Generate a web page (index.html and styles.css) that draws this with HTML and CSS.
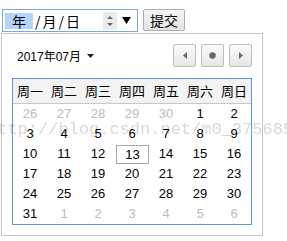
FILE: index.html
```html
<!DOCTYPE html>
<html>
<head>
<meta charset="utf-8">
<link rel="stylesheet" href="styles.css">
</head>
<body>
<div class="top">
  <div class="date-input">
    <span class="seg seg-sel">年</span><span class="sep">/</span><span class="seg">月</span><span class="sep">/</span><span class="seg">日</span>
    <span class="spin">
      <svg width="8" height="14" viewBox="0 0 8 14"><path d="M1 5 L4 2 L7 5 Z M1 9 L4 12 L7 9 Z" fill="#666"/></svg>
    </span>
    <span class="drop">
      <svg width="9" height="7" viewBox="0 0 9 7"><path d="M0 0 H9 L4.5 7 Z" fill="#000"/></svg>
    </span>
  </div>
  <button class="submit">提交</button>
</div>
<div class="popup">
  <div class="head">
    <div class="title">2017年07月 <svg class="caret" width="7" height="4" viewBox="0 0 7 4"><path d="M0 0 H7 L3.5 4 Z" fill="#222"/></svg></div>
    <div class="navs">
      <span class="nav"><svg width="4" height="7" viewBox="0 0 4 7"><path d="M4 0 V7 L0 3.5 Z" fill="#666"/></svg></span>
      <span class="nav"><svg width="7" height="7" viewBox="0 0 7 7"><circle cx="3.5" cy="3.5" r="3.2" fill="#666"/></svg></span>
      <span class="nav"><svg width="4" height="7" viewBox="0 0 4 7"><path d="M0 0 V7 L4 3.5 Z" fill="#666"/></svg></span>
    </div>
  </div>
  <div class="cal">
    <div class="wk">
      <span>周一</span><span>周二</span><span>周三</span><span>周四</span><span>周五</span><span>周六</span><span>周日</span>
    </div>
    <div class="days">
      <span class="o">26</span><span class="o">27</span><span class="o">28</span><span class="o">29</span><span class="o">30</span><span>1</span><span>2</span>
      <span>3</span><span>4</span><span>5</span><span>6</span><span>7</span><span>8</span><span>9</span>
      <span>10</span><span>11</span><span>12</span><span class="today">13</span><span>14</span><span>15</span><span>16</span>
      <span>17</span><span>18</span><span>19</span><span>20</span><span>21</span><span>22</span><span>23</span>
      <span>24</span><span>25</span><span>26</span><span>27</span><span>28</span><span>29</span><span>30</span>
      <span>31</span><span class="o">1</span><span class="o">2</span><span class="o">3</span><span class="o">4</span><span class="o">5</span><span class="o">6</span>
    </div>
  </div>
</div>
<div class="watermark"><span>http://blog.csdn.net/m0_37568540</span></div>
</body>
</html>
```
FILE: styles.css
```css
html, body {
  margin: 0;
  padding: 0;
  overflow: hidden;
  background: #fff;
}
body {
  position: relative;
  width: 287px;
  height: 241px;
  font-family: "Liberation Sans", "Noto Sans CJK SC", sans-serif;
  color: #000;
}
.top {
  display: flex;
  gap: 5px;
  padding: 9px 0 0 2px;
  align-items: flex-start;
}
.date-input {
  box-sizing: border-box;
  width: 136px;
  height: 23px;
  border: 1px solid #7ea6dc;
  display: flex;
  align-items: center;
  padding-left: 2px;
  font-size: 14px;
  font-family: "Noto Sans CJK SC", sans-serif;
}
.seg {
  line-height: 16px;
  height: 16px;
}
.seg-sel {
  background: #b4d3fb;
  width: 28px;
  text-align: center;
}
.sep {
  padding: 0 2px;
  line-height: 16px;
}
.spin {
  margin-left: auto;
  width: 14px;
  height: 18px;
  background: #ebebeb;
  display: flex;
  align-items: center;
  justify-content: center;
  margin-right: 5px;
}
.drop {
  display: flex;
  align-items: center;
  margin-right: 6px;
}
.submit {
  box-sizing: border-box;
  width: 42px;
  height: 22px;
  border: 1px solid #adadad;
  border-radius: 2px;
  background: linear-gradient(#f4f4f4, #e3e3e3);
  font-family: "Noto Sans CJK SC", sans-serif;
  font-size: 14px;
  padding: 0;
  line-height: 18px;
  color: #000;
}
.popup {
  box-sizing: border-box;
  width: 262px;
  margin: 1px 0 0 1px;
  border: 1px solid #c6c6c6;
  padding: 10px 10px 10px 10px;
}
.head {
  display: flex;
  justify-content: space-between;
  align-items: center;
  height: 23px;
}
.title {
  padding-left: 5px;
  font-size: 12px;
  font-family: "Liberation Sans", "Noto Sans CJK SC", sans-serif;
  display: flex;
  align-items: center;
  gap: 3px;
}
.caret {
  margin-left: 3px;
}
.navs {
  display: flex;
  gap: 5px;
}
.nav {
  box-sizing: border-box;
  width: 23px;
  height: 23px;
  border: 1px solid #bdbdbd;
  border-radius: 2px;
  background: linear-gradient(#fbfbfb, #e6e6e6);
  display: flex;
  align-items: center;
  justify-content: center;
}
.cal {
  margin-top: 11px;
  box-sizing: border-box;
  width: 240px;
  border: 1px solid #5c96e0;
}
.wk {
  display: grid;
  grid-template-columns: repeat(7, 34px);
  height: 24px;
  background: #f3f3f3;
  border-bottom: 1px solid #c8c8c8;
  font-family: "Noto Sans CJK SC", sans-serif;
  font-size: 13px;
  line-height: 24px;
  text-align: center;
}
.days {
  display: grid;
  grid-template-columns: repeat(7, 34px);
  grid-auto-rows: 20px;
  font-size: 13px;
  line-height: 20px;
  text-align: center;
}
.days .o {
  color: #bbbbbb;
}
.days .today {
  box-sizing: border-box;
  border: 1px solid #a8a8a8;
  line-height: 18px;
  margin-top: 1px;
  height: 19px;
  margin-left: 1px;
}
.watermark {
  position: absolute;
  left: 0;
  top: 121px;
  width: 287px;
  overflow: hidden;
  font-family: "Liberation Mono", monospace;
  font-size: 17px;
  line-height: 17px;
  white-space: nowrap;
  color: rgba(0, 0, 0, 0.18);
  pointer-events: none;
}
.watermark span {
  margin-left: -13px;
}
```
